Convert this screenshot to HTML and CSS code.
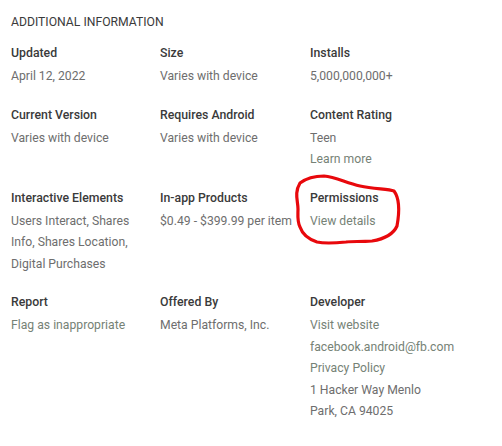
FILE: index.html
```html
<!DOCTYPE html>
<html lang="en">
    <head>
        <meta charset="utf-8">
        <meta name="viewport" content="width=device-width, initial-scale=1.0">
        <title>Additional Information</title>
        <link rel="stylesheet" href="styles.css">
    </head>
    <body>
        <section class="info"> <!-- whole block, heading on top and grid below. -->
            <h2 class="info-title">ADDITIONAL INFORMATION</h2>
            <div class="info-grid">
                <div class="meta">
                    <div class="meta-label">Updated</div>
                    <div class="meta-value">April 12, 2022</div>
                </div>
                <div class="meta">
                    <div class="meta-label">Size</div>
                    <div class="meta-value">Varies with device</div>
                </div>
                <div class="meta">
                    <div class="meta-label">Installs</div>
                    <div class="meta-value">5,000,000,000+</div>
                </div>

                <div class="meta">
                    <div class="meta-label">Current Version</div>
                    <div class="meta-value">Varies with device</div>
                </div>
                <div class="meta">
                    <div class="meta-label">Requires Android</div>
                    <div class="meta-value">Varies with device</div>
                </div>
                <div class="meta">
                    <div class="meta-label">Content Rating</div>
                    <div class="meta-value">Teen</div>
                    <a class="meta-link" href="#">Learn more</a>
                </div>

                <div class="meta">
                    <div class="meta-label">Interactive Elements</div>
                    <div class="meta-value">Users Interact, Shares Info, Shares Location, Digital Purchases</div>
                </div>
                <div class="meta">
                    <div class="meta-label">In-app Products</div>
                    <div class="meta-value">$0.49 - $399.99 per item</div>
                </div>
                <div class="meta marked"> <!-- someone circled this one in red. -->
                    <div class="meta-label">Permissions</div>
                    <a class="meta-link" href="#">View details</a>
                    <svg class="scribble" width="120" height="80" viewBox="0 0 120 80">
                        <path d="M10 12 C18 6 26 5 34 5 C46 6 56 12 70 15 C84 18 98 18 104 20 C110 28 109 44 107 55 C103 64 94 68 82 70 C70 71 64 70 56 71 C46 72 36 73 27 71 C18 68 12 62 10 56 C7 50 8 44 8 38 C8 30 4 22 10 12 Z"
                              fill="none" stroke="#e8080c" stroke-width="3.2" stroke-linejoin="round"/>
                    </svg>
                </div>

                <div class="meta">
                    <div class="meta-label">Report</div>
                    <a class="meta-link" href="#">Flag as inappropriate</a>
                </div>
                <div class="meta">
                    <div class="meta-label">Offered By</div>
                    <div class="meta-value">Meta Platforms, Inc.</div>
                </div>
                <div class="meta">
                    <div class="meta-label">Developer</div>
                    <a class="meta-link" href="#">Visit website</a>
                    <a class="meta-link" href="#">facebook.android@fb.com</a>
                    <a class="meta-link" href="#">Privacy Policy</a>
                    <div class="meta-value">1 Hacker Way Menlo Park, CA 94025</div>
                </div>
            </div>
        </section>
    </body>
</html>
```

FILE: styles.css
```css
*{
    margin: 0;
    padding: 0;
    box-sizing: border-box;
}
body{
    background: #fff;
    font-family: Roboto, "Liberation Sans", sans-serif;
    color: #333;
}
.info{
    padding: 12px 11px 0;
}
.info-title{
    font-size: 12.2px;
    font-weight: 400;
    line-height: 20px;
    color: #3a3a3a;
    margin-bottom: 10px;
}
.info-grid{
    display: grid;
    grid-template-columns: 149px 150px 150px; /* three equal-ish columns. */
    row-gap: 16px;
}
.meta{
    padding-right: 14px;
    position: relative; /* the scribble sits over it. */
}
.meta-label{
    font-size: 12.3px;
    font-weight: 500;
    line-height: 22px;
    color: #3a3a3a;
    margin-bottom: 2px;
}
.meta-value, .meta-link{
    display: block;
    font-size: 12.2px;
    line-height: 21.5px;
    color: #6e6e6e;
    text-decoration: none;
}
.meta-link{
    color: #768276;
}
.scribble{
    position: absolute;
    left: -20px;
    top: -16px;
    pointer-events: none;
}
```
